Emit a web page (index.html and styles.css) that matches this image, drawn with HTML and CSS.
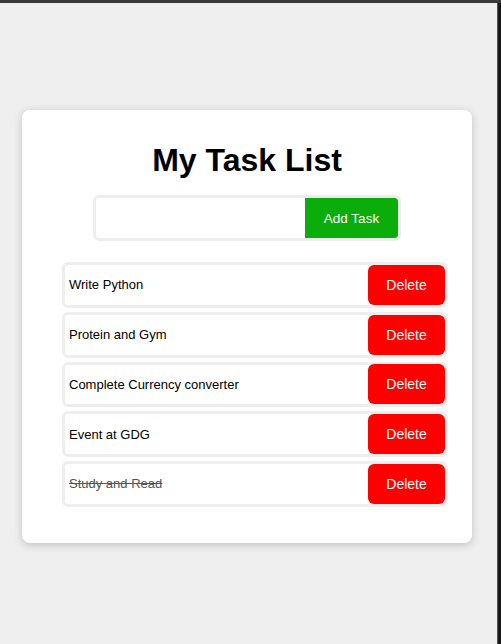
FILE: index.html
```
<!DOCTYPE html>
<html>
<head>
<meta charset="utf-8">
<link rel="stylesheet" href="styles.css">
</head>
<body>
<div class="topbar"></div>
<div class="screen">
  <main class="main">
    <section class="card">
      <h1 class="title">My Task List</h1>
      <div class="add-group">
        <input class="add-input" type="text">
        <button class="add-btn">Add Task</button>
      </div>
      <ul class="tasks">
        <li class="task"><span class="task-text">Write Python</span><button class="del-btn">Delete</button></li>
        <li class="task"><span class="task-text">Protein and Gym</span><button class="del-btn">Delete</button></li>
        <li class="task"><span class="task-text">Complete Currency converter</span><button class="del-btn">Delete</button></li>
        <li class="task"><span class="task-text">Event at GDG</span><button class="del-btn">Delete</button></li>
        <li class="task done"><span class="task-text">Study and Read</span><button class="del-btn">Delete</button></li>
      </ul>
    </section>
  </main>
  <aside class="side"></aside>
</div>
</body>
</html>
```
FILE: styles.css
```
* { box-sizing: border-box; }
html, body { margin: 0; padding: 0; height: 100%; }
body {
  background: #efefef;
  font-family: "Liberation Sans", Arial, sans-serif;
  display: flex;
  flex-direction: column;
  overflow: hidden;
}
.topbar { height: 3px; background: #3a3a3a; flex: none; }
.screen { flex: 1; display: flex; }
.main { flex: 1; padding-top: 107px; padding-left: 22px; }
.side {
  width: 4px;
  background: #181818;
  border-left: 1px solid #555;
  flex: none;
}
.card {
  width: 450px;
  height: 433px;
  background: #fff;
  border-radius: 8px;
  box-shadow: 0 2px 8px rgba(0,0,0,0.2);
  padding-top: 30px;
}
.title {
  margin: 0;
  text-align: center;
  font-size: 32px;
  font-weight: bold;
  line-height: 40px;
  color: #000;
}
.add-group {
  width: 308px;
  height: 46px;
  margin: 15px auto 0;
  display: flex;
  border: 3px solid #eee;
  border-radius: 6px;
  overflow: hidden;
}
.add-input {
  flex: 1;
  border: none;
  outline: none;
  min-width: 0;
}
.add-btn {
  width: 93px;
  border: none;
  background: #0aad0a;
  color: #fff;
  font-family: inherit;
  font-size: 13.5px;
  border-radius: 0 3px 3px 0;
}
.tasks {
  list-style: none;
  margin: 21px 0 0 40px;
  padding: 0;
  width: 386px;
}
.task {
  display: flex;
  align-items: center;
  height: 45.75px;
  margin-bottom: 4px;
  border: 3px solid #eee;
  border-radius: 6px;
  padding-left: 4px;
}
.task-text {
  flex: 1;
  font-size: 13px;
  color: #000;
}
.done .task-text { text-decoration: line-through; color: #555; }
.del-btn {
  width: 77px;
  height: 40px;
  border: none;
  border-radius: 6px;
  background: #ff0000;
  color: #fff;
  font-family: inherit;
  font-size: 14px;
}
```
